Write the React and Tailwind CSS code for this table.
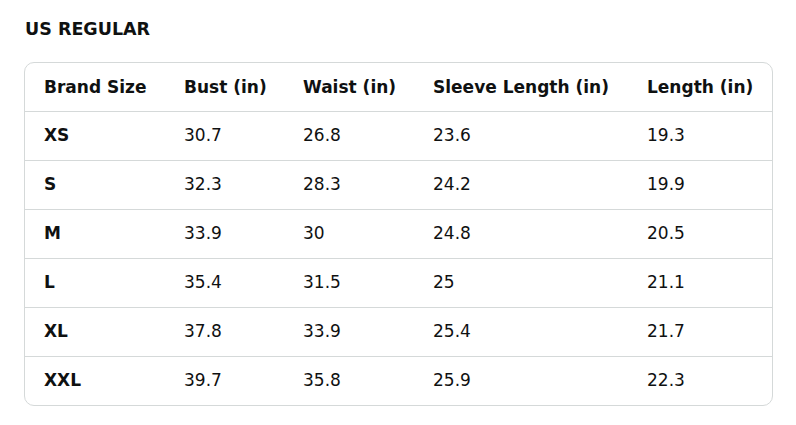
export default function App() {
  const rows = [
    ["XS", "30.7", "26.8", "23.6", "19.3"],
    ["S", "32.3", "28.3", "24.2", "19.9"],
    ["M", "33.9", "30", "24.8", "20.5"],
    ["L", "35.4", "31.5", "25", "21.1"],
    ["XL", "37.8", "33.9", "25.4", "21.7"],
    ["XXL", "39.7", "35.8", "25.9", "22.3"],
  ];
  const head = ["Brand Size", "Bust (in)", "Waist (in)", "Sleeve Length (in)", "Length (in)"];
  const grid = "grid grid-cols-[140px_119px_130px_214px_1fr] items-center";
  return (
    <div className="w-[796px] h-[425px] bg-white text-[#0f1111] font-['DejaVu_Sans',sans-serif] pl-[24px] pr-[23px] pt-[17px]">
      <div className="text-[17.5px] font-bold leading-[24px] pl-px">US REGULAR</div>
      <div className="mt-[21px] border border-[#d5d9d9] rounded-[10px] overflow-hidden">
        <div className={grid + " h-[48px] text-[17px] font-bold"}>
          {head.map((h) => (
            <div key={h} className="pl-[19px] pt-[2px]">{h}</div>
          ))}
        </div>
        {rows.map((r) => (
          <div key={r[0]} className={grid + " h-[49px] border-t border-[#d5d9d9] text-[17px]"}>
            {r.map((c, i) => (
              <div key={i} className={"pl-[19px] " + (i === 0 ? "font-bold" : "")}>{c}</div>
            ))}
          </div>
        ))}
      </div>
    </div>
  );
}
